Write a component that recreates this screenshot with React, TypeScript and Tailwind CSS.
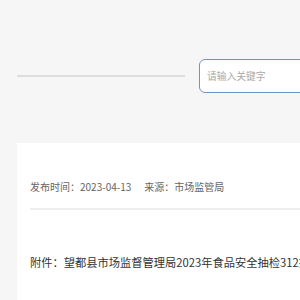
export default function App() {
  return (
    <div
      className="h-screen overflow-hidden bg-[#f6f6f6]"
      style={{ fontFamily: '"Microsoft YaHei", "Noto Sans CJK SC", sans-serif' }}
    >
      <div className="w-[1000px] pl-[17px]">
        {/* header: rule + search */}
        <div className="flex items-center gap-[14px] pt-[59px]">
          <div className="h-[2px] w-[168px] bg-[#dddddd]" />
          <div className="flex h-[34px] w-[300px] items-center rounded-[6px] border border-[#7394c0] bg-white px-[7px]">
            <input
              className="w-full bg-transparent text-[9.75px] text-[#333] outline-none placeholder:text-[#aaaaaa]"
              placeholder="请输入关键字"
            />
          </div>
        </div>

        {/* article panel */}
        <div className="mt-[50px] min-h-[300px] bg-white px-[13px] pt-[33px]">
          <div className="flex h-[20px] items-center gap-[13px] text-[10px] text-[#666]">
            <span>发布时间：2023-04-13</span>
            <span>来源：市场监管局</span>
          </div>
          <div className="mt-[12px] h-[2px] bg-[#eeeeee]" />
          <p className="mt-[40px] h-[24px] whitespace-nowrap text-[11.25px] leading-[24px] text-[#333]">
            附件：望都县市场监督管理局2023年食品安全抽检312批次合格信息
          </p>
        </div>
      </div>
    </div>
  );
}
